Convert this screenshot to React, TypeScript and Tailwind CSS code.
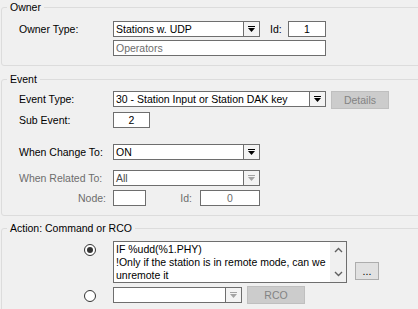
import React from "react";

function Arrow({ disabled }: { disabled?: boolean }) {
  const c = disabled ? "#a3a3a3" : "#000000";
  return (
    <svg width="7" height="7" viewBox="0 0 7 7">
      <rect x="0" y="0" width="7" height="1" fill={c} />
      <polygon points="0,2 7,2 3.5,6" fill={c} />
    </svg>
  );
}

function Combo({
  w,
  text,
  disabled,
  textClass = "text-black",
}: {
  w: string;
  text?: string;
  disabled?: boolean;
  textClass?: string;
}) {
  return (
    <div className={`flex h-[16px] border border-[#6e6e6e] bg-white ${w}`}>
      <span className={`flex-1 pl-[2px] leading-[14px] whitespace-nowrap overflow-hidden ${textClass}`}>{text}</span>
      <div className="flex w-[16px] items-center justify-center border-l border-[#6e6e6e] bg-[#f3f3f3]">
        <Arrow disabled={disabled} />
      </div>
    </div>
  );
}

function Input({ w, text, center, textClass = "text-black" }: { w: string; text?: string; center?: boolean; textClass?: string }) {
  return (
    <div
      className={`h-[16px] border border-[#6e6e6e] bg-white leading-[14px] whitespace-nowrap ${w} ${
        center ? "text-center" : "pl-[2px]"
      } ${textClass}`}
    >
      {text}
    </div>
  );
}

function Btn({ w, label, disabled }: { w: string; label: string; disabled?: boolean }) {
  return (
    <div
      className={`flex h-[18px] items-center justify-center border ${w} ${
        disabled ? "border-[#bfbfbf] bg-[#cccccc] text-[#838383]" : "border-[#adadad] bg-[#e1e1e1] text-black"
      }`}
    >
      {label}
    </div>
  );
}

function Radio({ checked }: { checked?: boolean }) {
  return (
    <div className="flex h-[12px] w-[12px] items-center justify-center rounded-full border border-[#333333] bg-white">
      {checked && <div className="h-[6px] w-[6px] rounded-full bg-[#333333]" />}
    </div>
  );
}

function Group({ title, className, children }: { title: string; className: string; children: React.ReactNode }) {
  return (
    <fieldset className={`ml-[1px] w-[440px] rounded-[3px] border border-[#dcdcdc] ${className}`}>
      <legend className="ml-[5px] px-[3px] leading-[13px] text-black">{title}</legend>
      {children}
    </fieldset>
  );
}

export default function App() {
  return (
    <div className="h-[309px] w-[418px] overflow-hidden bg-[#f0f0f0] font-['Liberation_Sans',Arial,sans-serif] text-[10.5px] leading-[13px] text-black">
      <Group title="Owner" className="mt-[1px] pb-[9px]">
        <div className="flex flex-col gap-[3px] pl-[17px] pt-[7px]">
          <div className="flex items-center">
            <span className="w-[94px]">Owner Type:</span>
            <Combo w="w-[147px]" text="Stations w. UDP" />
            <span className="ml-[10px] w-[18px]">Id:</span>
            <Input w="w-[38px]" text="1" center />
          </div>
          <div className="flex">
            <span className="w-[94px]" />
            <Input w="w-[213px]" text="Operators" textClass="text-[#6d6d6d]" />
          </div>
        </div>
      </Group>

      <Group title="Event" className="mt-[7px] pb-[9px]">
        <div className="flex flex-col pl-[17px] pt-[5px]">
          <div className="flex h-[18px] items-start">
            <span className="w-[94px] leading-[16px]">Event Type:</span>
            <Combo w="w-[213px]" text="30 - Station Input or Station DAK key" />
            <div className="ml-[5px]">
              <Btn w="w-[58px]" label="Details" disabled />
            </div>
          </div>
          <div className="mt-[3px] flex items-center">
            <span className="w-[94px]">Sub Event:</span>
            <Input w="w-[37px]" text="2" center />
          </div>
          <div className="mt-[16px] flex items-center">
            <span className="w-[94px]">When Change To:</span>
            <Combo w="w-[147px]" text="ON" />
          </div>
          <div className="mt-[10px] flex items-center">
            <span className="w-[94px] text-[#6d6d6d]">When Related To:</span>
            <Combo w="w-[147px]" text="All" disabled textClass="text-[#4a4a4a]" />
          </div>
          <div className="mt-[4px] flex items-center">
            <span className="w-[94px] pr-[7px] text-right text-[#6d6d6d]">Node:</span>
            <Input w="w-[33px]" />
            <span className="w-[54px] pr-[8px] text-right text-[#6d6d6d]">Id:</span>
            <Input w="w-[60px]" text="0" center textClass="text-[#6d6d6d]" />
          </div>
        </div>
      </Group>

      <Group title="Action: Command or RCO" className="mt-[6px] pb-[20px]">
        <div className="flex flex-col pl-[82px] pt-[6px]">
          <div className="flex items-start">
            <div className="mt-[3px] w-[29px]">
              <Radio checked />
            </div>
            <div className="flex h-[42px] w-[234px] border border-[#6e6e6e] bg-white">
              <div className="flex-1 whitespace-nowrap pl-[2px] pt-[1px] leading-[13px]">
                <div>IF %udd(%1.PHY)</div>
                <div>!Only if the station is in remote mode, can we</div>
                <div>unremote it</div>
              </div>
              <div className="flex w-[16px] flex-col items-center justify-between bg-[#f0f0f0] py-[5px] text-[#606060]">
                <svg width="9" height="6" viewBox="0 0 9 6">
                  <polyline points="1,5 4.5,1.5 8,5" fill="none" stroke="#606060" strokeWidth="1.4" />
                </svg>
                <svg width="9" height="6" viewBox="0 0 9 6">
                  <polyline points="1,1 4.5,4.5 8,1" fill="none" stroke="#606060" strokeWidth="1.4" />
                </svg>
              </div>
            </div>
            <div className="ml-[8px] mt-[21px]">
              <Btn w="w-[24px]" label="..." />
            </div>
          </div>
          <div className="mt-[3px] flex items-start">
            <div className="mt-[4px] w-[29px]">
              <Radio />
            </div>
            <div className="mt-[1px]">
              <Combo w="w-[129px]" disabled />
            </div>
            <div className="ml-[5px]">
              <Btn w="w-[58px]" label="RCO" disabled />
            </div>
          </div>
        </div>
      </Group>
    </div>
  );
}
